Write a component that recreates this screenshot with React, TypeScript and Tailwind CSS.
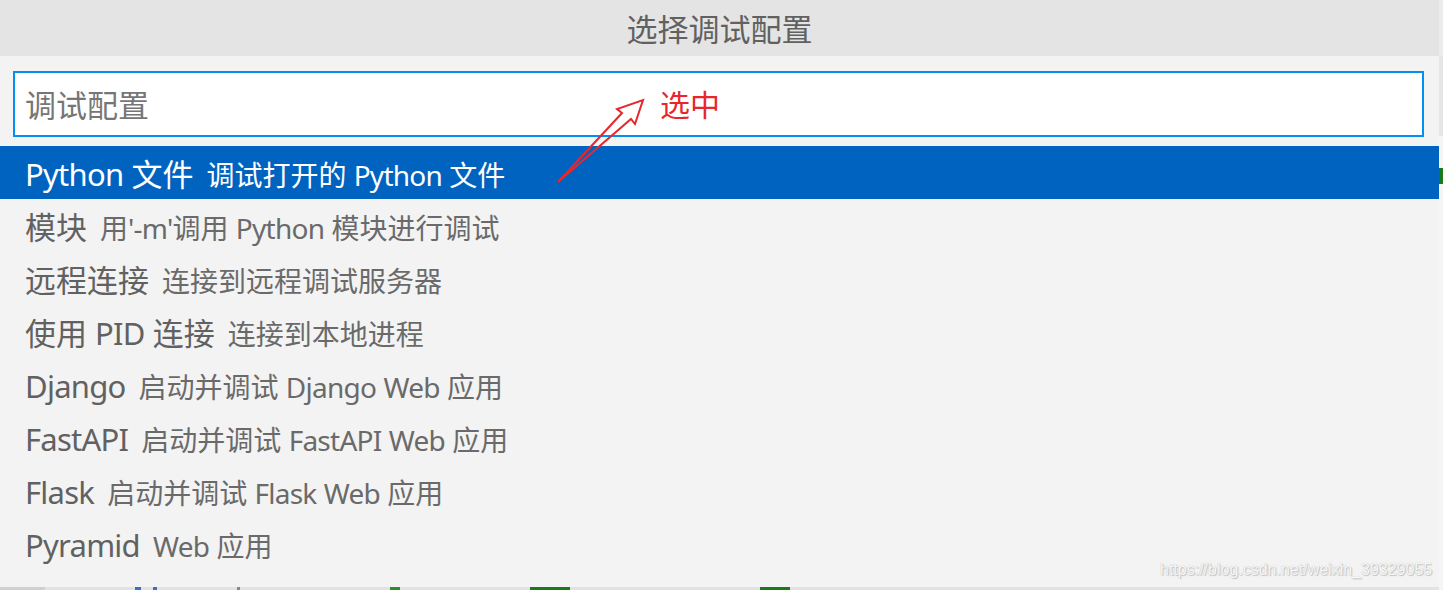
import React from 'react';

type Item = { label: string; desc: string };

const items: Item[] = [
  { label: 'Python 文件', desc: '调试打开的 Python 文件' },
  { label: '模块', desc: "用'-m'调用 Python 模块进行调试" },
  { label: '远程连接', desc: '连接到远程调试服务器' },
  { label: '使用 PID 连接', desc: '连接到本地进程' },
  { label: 'Django', desc: '启动并调试 Django Web 应用' },
  { label: 'FastAPI', desc: '启动并调试 FastAPI Web 应用' },
  { label: 'Flask', desc: '启动并调试 Flask Web 应用' },
  { label: 'Pyramid', desc: 'Web 应用' },
];

const font = { fontFamily: '"Noto Sans", "Noto Sans CJK SC", sans-serif' };

// latin runs are tightened a little so they sit closer to Segoe UI widths
const Txt: React.FC<{ text: string }> = ({ text }) => (
  <>
    {text.split(/([A-Za-z'\-]+)/).map((part, i) =>
      /^[A-Za-z'\-]+$/.test(part) ? (
        <span key={i} className="tracking-[-0.75px]">
          {part}
        </span>
      ) : (
        <span key={i}>{part}</span>
      )
    )}
  </>
);

const App: React.FC = () => {
  return (
    <div className="relative flex w-[1443px] h-[590px] overflow-hidden bg-[#f3f3f3]" style={font}>
      <div className="flex flex-col w-[1439px] h-full">
        <div className="flex items-center justify-center h-[56px] pt-[3px] bg-[#e4e4e4] text-[31px] leading-none text-[#616161]">
          选择调试配置
        </div>
        <div className="flex-1 flex flex-col bg-[#f3f3f3] pt-[15px]">
          <div className="mx-[13px] w-[1411px] h-[66px] border-2 border-[#0090f1] bg-white flex items-center pl-[10px] pt-[3px]">
            <span className="text-[31px] leading-none text-[#767676]">调试配置</span>
          </div>
          <div className="mt-[9px] flex flex-col">
            {items.map((it, i) => (
              <div
                key={it.label}
                className={
                  i === 0
                    ? 'flex items-center h-[53px] px-[25px] pt-[4px] bg-[#0063bf] text-white'
                    : 'flex items-center h-[53px] px-[25px] pt-[4px] text-[#616161]'
                }
              >
                <span className="text-[31px] leading-none whitespace-pre">
                  <Txt text={it.label} />
                </span>
                <span
                  className={
                    i === 0
                      ? 'ml-[13px] text-[28px] leading-none text-white whitespace-pre'
                      : 'ml-[13px] text-[28px] leading-none text-[#6a6a6a] whitespace-pre'
                  }
                >
                  <Txt text={it.desc} />
                </span>
              </div>
            ))}
          </div>
        </div>
        <div className="flex h-[3px] bg-[#e2e2e2]">
          <div className="w-[45px] bg-[#d0d0d0]" />
          <div className="ml-[90px] w-[6px] bg-[#3b6fc4]" />
          <div className="ml-[12px] w-[4px] bg-[#3b6fc4]" />
          <div className="ml-[80px] w-[3px] bg-[#888]" />
          <div className="ml-[150px] w-[10px] bg-[#2e8b2e]" />
          <div className="ml-[130px] w-[40px] bg-[#1a7a1a]" />
          <div className="ml-[190px] w-[30px] bg-[#1a7a1a]" />
        </div>
      </div>
      <div className="flex flex-col w-[4px] h-full">
        <div className="h-[56px] bg-[#ececec]" />
        <div className="h-[80px] bg-[#e6e6e6]" />
        <div className="h-[32px] bg-[#f5f5f5]" />
        <div className="h-[16px] bg-[#1a7a1a]" />
        <div className="flex-1 bg-[#f5f5f5]" />
      </div>

      <svg className="absolute left-0 top-0 pointer-events-none" width="1443" height="590">
        <polygon
          points="558,182 622,113 617,109 643,100 635,124 631,119"
          fill="none"
          stroke="#e8262b"
          strokeWidth="2"
          strokeLinejoin="miter"
        />
      </svg>
      <div className="absolute left-[660px] top-[90px] text-[30px] leading-none text-[#e8262b]">选中</div>
      <div
        className="absolute left-[1160px] top-[562px] text-[16px] leading-none text-[#f7f7f7]"
        style={{ fontFamily: '"Liberation Sans", Arial, sans-serif', textShadow: '0 0 1px #b0b0b0, 1px 1px 1px #c4c4c4' }}
      >
        https://blog.csdn.net/weixin_39329055
      </div>
    </div>
  );
};

export default App;
